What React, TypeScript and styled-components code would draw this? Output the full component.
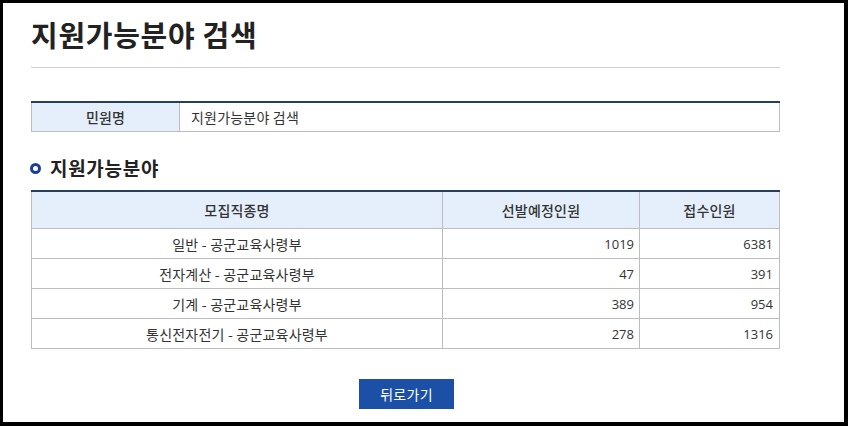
import React from "react";
import styled, { createGlobalStyle } from "styled-components";

const GlobalStyle = createGlobalStyle`
  html, body { margin: 0; padding: 0; background: #000; }
  body { font-family: "Noto Sans CJK KR", "Noto Sans", sans-serif; color: #333; }
`;

const Frame = styled.div`
  box-sizing: border-box;
  margin: 3px 4px 0 3px;
  height: 419px;
  background: #fff;
  padding: 0 64px 0 28px;
  overflow: hidden;
`;

const Title = styled.h1`
  margin: 0;
  padding: 13px 0 0;
  font-size: 29px;
  line-height: 36px;
  font-weight: 700;
  color: #222;
  letter-spacing: 0.7px;
`;

const Divider = styled.hr`
  margin: 15px 0 0;
  border: 0;
  border-top: 1px solid #cfcfcf;
  height: 0;
`;

const InfoTable = styled.table`
  margin-top: 33px;
  width: 100%;
  border-collapse: collapse;
  border-top: 2px solid #263e60;
  font-size: 14px;
  letter-spacing: 0.2px;
  td, th { border: 1px solid #bdbdbd; border-top: 0; height: 28px; padding: 0; line-height: 20px; }
`;

const Label = styled.th`
  width: 147px;
  background: #e5effc;
  font-weight: 500;
  color: #333;
  text-align: center;
`;

const Value = styled.td`
  padding-left: 11px !important;
  color: #333;
`;

const SectionTitle = styled.h2`
  margin: 24px 0 0;
  display: flex;
  align-items: center;
  gap: 9px;
  font-size: 19px;
  line-height: 24px;
  font-weight: 700;
  color: #222;
  letter-spacing: 0.7px;
`;

const Bullet = styled.span`
  box-sizing: border-box;
  width: 11px;
  height: 11px;
  border-radius: 50%;
  border: 3px solid #1c3f95;
  margin-left: -1px;
`;

const DataTable = styled.table`
  margin-top: 10px;
  width: 100%;
  border-collapse: collapse;
  border-top: 2px solid #263e60;
  font-size: 14px;
  th, td { border: 1px solid #bdbdbd; border-top-width: 0; padding: 0; line-height: 20px; }
  tbody td { border-top-width: 1px; }
`;

const HeadCell = styled.th<{ $w?: number }>`
  height: 36px;
  background: #e5effc;
  font-weight: 500;
  color: #333;
  text-align: center;
  letter-spacing: 0.2px;
  ${(p) => (p.$w ? `width: ${p.$w}px;` : "")}
`;

const Cell = styled.td<{ $num?: boolean; $pad?: number }>`
  height: 29px;
  text-align: ${(p) => (p.$num ? "right" : "center")};
  padding: 0 ${(p) => (p.$num ? p.$pad ?? 5 : 0)}px 0 0 !important;
  font-family: ${(p) => (p.$num ? '"Open Sans", "Noto Sans", sans-serif' : "inherit")};
  font-size: ${(p) => (p.$num ? "13px" : "14px")};
  letter-spacing: ${(p) => (p.$num ? "0" : "0.2px")};
  color: #333;
`;

const ButtonRow = styled.div`
  display: flex;
  justify-content: center;
  margin-top: 30px;
  padding-left: 2px;
`;

const BackButton = styled.button`
  width: 95px;
  height: 30px;
  border: 0;
  background: #1c4fa6;
  color: #fff;
  font-family: "Noto Sans CJK KR", sans-serif;
  font-size: 14px;
  letter-spacing: 0.3px;
  cursor: pointer;
`;

const rows = [
  { name: "일반 - 공군교육사령부", plan: 1019, recv: 6381 },
  { name: "전자계산 - 공군교육사령부", plan: 47, recv: 391 },
  { name: "기계 - 공군교육사령부", plan: 389, recv: 954 },
  { name: "통신전자전기 - 공군교육사령부", plan: 278, recv: 1316 },
];

export default function App() {
  return (
    <>
      <GlobalStyle />
      <Frame>
        <Title>지원가능분야 검색</Title>
        <Divider />
        <InfoTable>
          <tbody>
            <tr>
              <Label>민원명</Label>
              <Value>지원가능분야 검색</Value>
            </tr>
          </tbody>
        </InfoTable>
        <SectionTitle>
          <Bullet />
          지원가능분야
        </SectionTitle>
        <DataTable>
          <thead>
            <tr>
              <HeadCell>모집직종명</HeadCell>
              <HeadCell $w={196}>선발예정인원</HeadCell>
              <HeadCell $w={139}>접수인원</HeadCell>
            </tr>
          </thead>
          <tbody>
            {rows.map((r) => (
              <tr key={r.name}>
                <Cell>{r.name}</Cell>
                <Cell $num>{r.plan}</Cell>
                <Cell $num $pad={6}>{r.recv}</Cell>
              </tr>
            ))}
          </tbody>
        </DataTable>
        <ButtonRow>
          <BackButton>뒤로가기</BackButton>
        </ButtonRow>
      </Frame>
    </>
  );
}
